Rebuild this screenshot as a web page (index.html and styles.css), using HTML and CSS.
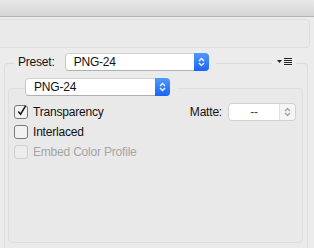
FILE: index.html
```html
<!DOCTYPE html>
<html lang="en">
<head>
    <meta charset="UTF-8">
    <title>Save for Web - PNG-24</title>
    <link rel="stylesheet" href="styles.css">
</head>
<body>
    <div class="title-bar"></div>

    <div class="top-panel"></div>

    <div class="settings-box">
        <div class="preset-row">
            <span class="preset-label">Preset:</span>
            <div class="popup popup-wide">
                <span class="popup-text">PNG-24</span>
                <span class="popup-arrows">
                    <svg width="7" height="10" viewBox="0 0 7 10"><path d="M1 4 L3.5 1.5 L6 4 M1 6 L3.5 8.5 L6 6" fill="none" stroke="#fff" stroke-width="1.3"/></svg>
                </span>
            </div>
            <span class="line-gap"></span>
            <span class="spacer"></span>
            <span class="menu-icon">
                <svg width="16" height="8" viewBox="0 0 16 8"><path d="M0 2 H5 L2.5 5 Z" fill="#222"/><path d="M7 0.5 H15 M7 2.5 H15 M7 4.5 H15 M7 6.5 H15" stroke="#222" stroke-width="1"/></svg>
            </span>
        </div>

        <div class="format-box">
            <div class="format-row">
                <div class="popup popup-narrow">
                    <span class="popup-text">PNG-24</span>
                    <span class="popup-arrows">
                        <svg width="7" height="10" viewBox="0 0 7 10"><path d="M1 4 L3.5 1.5 L6 4 M1 6 L3.5 8.5 L6 6" fill="none" stroke="#fff" stroke-width="1.3"/></svg>
                    </span>
                </div>
                <span class="line-gap"></span>
            </div>

            <div class="option-row">
                <span class="checkbox checked">
                    <svg width="12" height="13" viewBox="0 0 12 13"><path d="M2.5 7.5 L5 10.5 L10.5 1.5" fill="none" stroke="#111" stroke-width="1.6"/></svg>
                </span>
                <span class="option-label">Transparency</span>
                <div class="matte">
                    <span class="matte-label">Matte:</span>
                    <div class="matte-field">
                        <span class="matte-value">--</span>
                        <span class="matte-stepper">
                            <svg width="7" height="10" viewBox="0 0 7 10"><path d="M1 4 L3.5 1.5 L6 4 M1 6 L3.5 8.5 L6 6" fill="none" stroke="#999" stroke-width="1.1"/></svg>
                        </span>
                    </div>
                </div>
            </div>
            <div class="option-row">
                <span class="checkbox"></span>
                <span class="option-label">Interlaced</span>
            </div>
            <div class="option-row disabled">
                <span class="checkbox"></span>
                <span class="option-label">Embed Color Profile</span>
            </div>
        </div>
    </div>
</body>
</html>
```

FILE: styles.css
```css
body {
    margin: 0;
    padding: 0;
    background: #ececec;
    font-family: "Liberation Sans", Arial, sans-serif;
    font-size: 12px;
    letter-spacing: -0.2px;
    color: #111;
    overflow: hidden;
}

.title-bar {
    height: 16px;
    background: linear-gradient(to bottom, #e8e8e8, #d5d5d5);
    border-bottom: 1px solid #b4b4b4;
}

.top-panel {
    height: 27px;
    margin: 2px 4px 0 -6px;
    border: 1px solid #dedede;
    border-radius: 4px;
    background: #eaeaea;
}

/* outer group, its top line runs through the preset row */
.settings-box {
    margin: 15px 6px 0 4px;
    height: 184px;
    border: 1px solid #dcdcdc;
    border-bottom: 0;
    border-radius: 4px 4px 0 0;
    background: #ebebeb;
}

.preset-row {
    display: flex;
    align-items: center;
    height: 18px;
    margin-top: -11px;
}

.preset-label {
    margin-left: 10px;
    padding: 0 10px 0 3px;
    line-height: 15px;
    background: #ececec;
}

.popup {
    display: flex;
    height: 16px;
    border: 1px solid #c6c6c6;
    border-top-color: #d2d2d2;
    border-bottom-color: #b0b0b0;
    border-radius: 4px;
    background: #fff;
}

.popup-wide {
    width: 142px;
}

.popup-narrow {
    width: 143px;
}

.popup-text {
    flex: 1;
    padding-left: 8px;
    line-height: 16px;
}

.popup-arrows {
    display: flex;
    align-items: center;
    justify-content: center;
    width: 15px;
    margin: -1px -1px -1px 0;
    border-radius: 0 4px 4px 0;
    background: linear-gradient(to bottom, #4e9af9, #1b63f6);
}

.line-gap {
    width: 7px;
    height: 3px;
    background: #ececec;
}

.spacer {
    flex: 1;
}

.menu-icon {
    display: flex;
    align-items: center;
    padding: 0 3px 0 5px;
    margin-right: 11px;
    height: 10px;
    background: #ececec;
}

.format-box {
    margin: 17px 4px 0 3px;
    height: 153px;
    border: 1px solid #dedede;
    border-radius: 4px;
    background: #e9e9e9;
}

.format-row {
    display: flex;
    align-items: center;
    height: 18px;
    margin-top: -11px;
    padding-left: 16px;
}

.format-row .line-gap {
    background: #ebebeb;
}

.option-row {
    display: flex;
    align-items: center;
    height: 20px;
    padding: 0 6px 0 5px;
}

.format-row + .option-row {
    margin-top: 6px;
}

.checkbox {
    display: flex;
    align-items: center;
    justify-content: center;
    width: 12px;
    height: 12px;
    margin-right: 5px;
    border: 1px solid #7a7a7a;
    border-radius: 3px;
    background: #f2f2f2;
}

.checkbox svg {
    margin-top: -4px;
    margin-left: 1px;
}

.disabled .checkbox {
    border-color: #cfcfcf;
    background: #ececec;
}

.disabled .option-label {
    color: #a5a5a5;
}

.matte {
    display: flex;
    align-items: center;
    margin-left: auto;
}

.matte-label {
    margin-right: 6px;
}

.matte-field {
    display: flex;
    width: 66px;
    height: 16px;
    border: 1px solid #d0d0d0;
    border-radius: 4px;
    background: #fff;
}

.matte-value {
    flex: 1;
    text-align: center;
    line-height: 16px;
    color: #444;
}

.matte-stepper {
    display: flex;
    align-items: center;
    justify-content: center;
    width: 15px;
    border-left: 1px solid #e2e2e2;
    border-radius: 0 4px 4px 0;
    background: #f5f5f5;
}
```
